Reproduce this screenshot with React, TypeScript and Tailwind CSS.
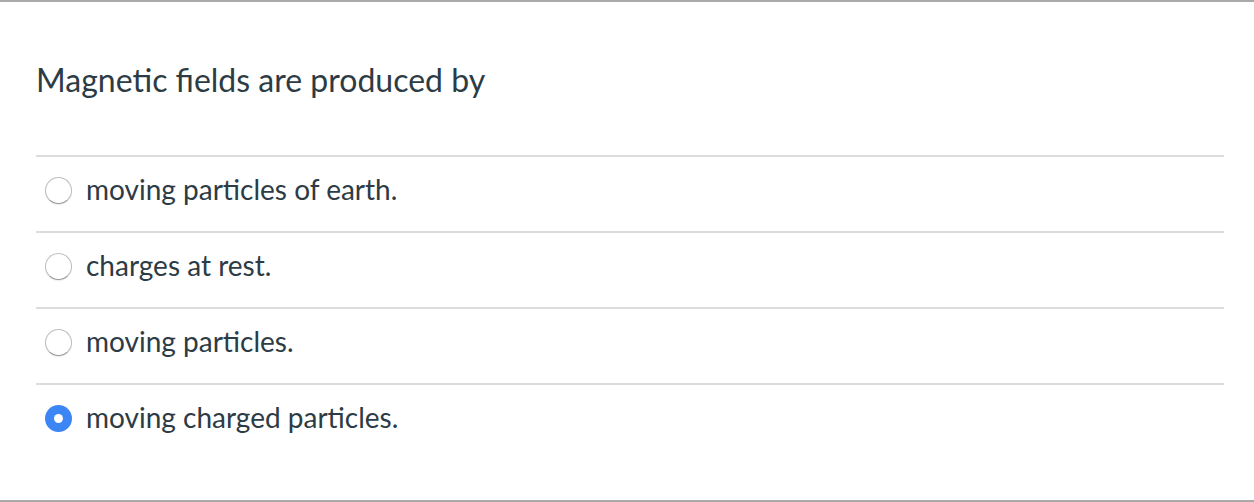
import React from 'react';

const options = [
  { id: 'a', label: 'moving particles of earth.' },
  { id: 'b', label: 'charges at rest.' },
  { id: 'c', label: 'moving particles.' },
  { id: 'd', label: 'moving charged particles.' },
];

function Radio({ checked }: { checked: boolean }) {
  if (checked) {
    return (
      <span className="flex h-[27px] w-[27px] shrink-0 items-center justify-center rounded-full bg-[#3b85f5]">
        <span className="h-[9px] w-[9px] rounded-full bg-white" />
      </span>
    );
  }
  return (
    <span className="h-[27px] w-[27px] shrink-0 rounded-full border border-[#bdbdbd] border-b-[#9a9a9a] bg-white shadow-[0_1px_1px_rgba(0,0,0,0.08)]" />
  );
}

export default function App() {
  const selected = 'd';

  return (
    <div className="h-[502px] w-[1254px] border-t-2 border-b-2 border-[#a9a9a9] bg-white font-['Lato',sans-serif] text-[#2d3b45]">
      <div className="px-[36px] pr-[30px]">
        <h1 className="flex h-[153px] items-center pt-[3px] text-[32px] font-normal">
          Magnetic fields are produced by
        </h1>
        <div>
          {options.map((o) => (
            <div
              key={o.id}
              className="flex h-[76px] items-center gap-[14px] border-t-2 border-[#dcdcdc] pb-[8px] pl-[9px]"
            >
              <Radio checked={o.id === selected} />
              <span className="-translate-y-[1px] text-[28px] leading-none">{o.label}</span>
            </div>
          ))}
        </div>
      </div>
    </div>
  );
}
